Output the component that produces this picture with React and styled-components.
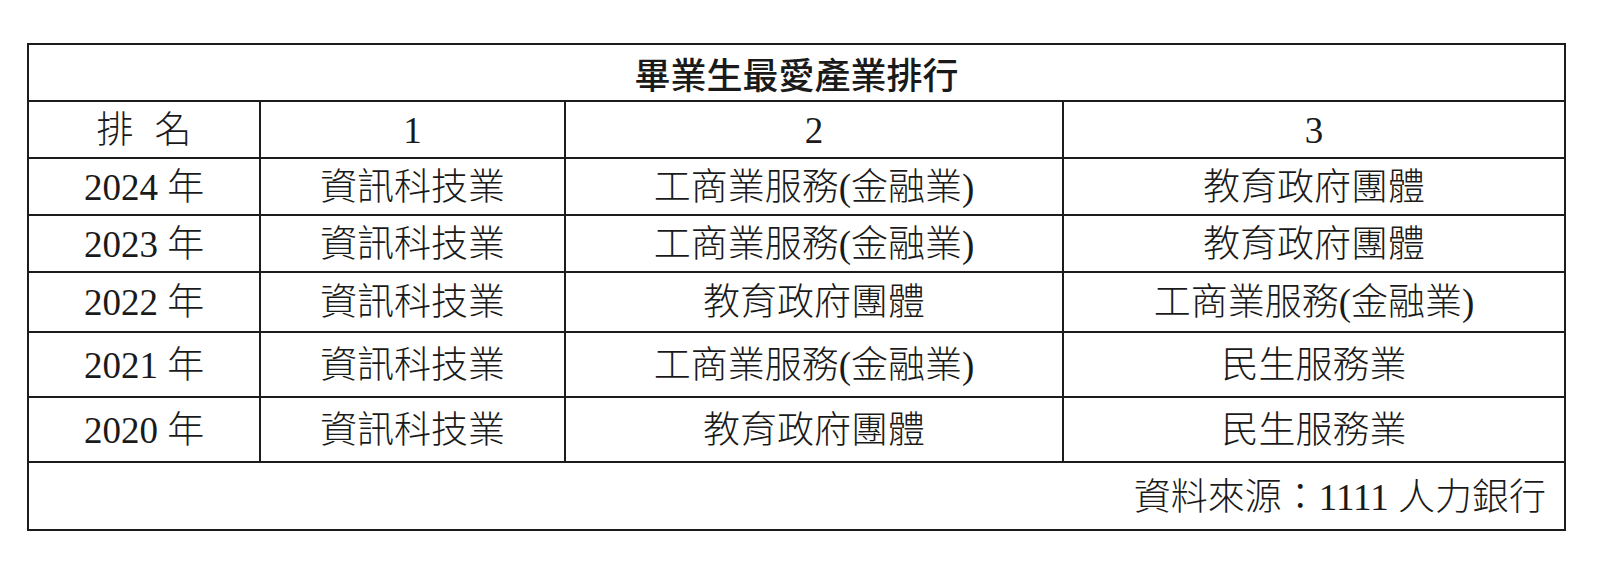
import React from 'react';
import styled, { createGlobalStyle } from 'styled-components';

const GlobalStyle = createGlobalStyle`
    html, body {
      margin: 0;
      padding: 0;
      background: #ffffff;
    }
    body {
      font-family: "Liberation Serif", "Noto Sans CJK TC", serif;
      color: #1a1a1a;
    }
`;

const Page = styled.div`
    padding: 43px 0 0 27px;
`;

const RankTable = styled.div`
    display: grid;
    grid-template-columns: 232px 305px 498px 502px;
    grid-template-rows: 57px 57px 57px 57px 60px 65px 65px 68px;
    width: max-content;
    border-top: 2px solid #1c1c1c;
    border-left: 2px solid #1c1c1c;
`;

const Cell = styled.div`
    box-sizing: border-box;
    display: flex;
    align-items: center;
    justify-content: center;
    border-right: 2px solid #1c1c1c;
    border-bottom: 2px solid #1c1c1c;
    font-size: 37px;
    font-weight: 300;
    line-height: 1;
    white-space: nowrap;
    padding-top: 1px;
`;

const TitleCell = styled(Cell)`
    grid-column: 1 / -1;
    font-family: "Noto Sans CJK TC", sans-serif;
    font-size: 36px;
    font-weight: 500;
    padding-top: 0;
`;

const RankHead = styled(Cell)`
    word-spacing: 12px;
`;

const SourceCell = styled(Cell)`
    grid-column: 1 / -1;
    justify-content: flex-end;
    padding-right: 18px;
    padding-top: 3px;
`;

const ranking = [
    { year: 2024, items: ['資訊科技業', '工商業服務(金融業)', '教育政府團體'] },
    { year: 2023, items: ['資訊科技業', '工商業服務(金融業)', '教育政府團體'] },
    { year: 2022, items: ['資訊科技業', '教育政府團體', '工商業服務(金融業)'] },
    { year: 2021, items: ['資訊科技業', '工商業服務(金融業)', '民生服務業'] },
    { year: 2020, items: ['資訊科技業', '教育政府團體', '民生服務業'] },
];

const App = () => (
    <Page>
        <GlobalStyle />
        <RankTable>
            <TitleCell>畢業生最愛產業排行</TitleCell>
            <RankHead>排 名</RankHead>
            <Cell>1</Cell>
            <Cell>2</Cell>
            <Cell>3</Cell>
            {ranking.map(({ year, items }) => (
                <React.Fragment key={year}>
                    <Cell>{`${year} 年`}</Cell>
                    {items.map((item, i) => (
                        // eslint-disable-next-line react/no-array-index-key
                        <Cell key={i}>{item}</Cell>
                    ))}
                </React.Fragment>
            ))}
            <SourceCell>資料來源：1111 人力銀行</SourceCell>
        </RankTable>
    </Page>
);

export default App;
